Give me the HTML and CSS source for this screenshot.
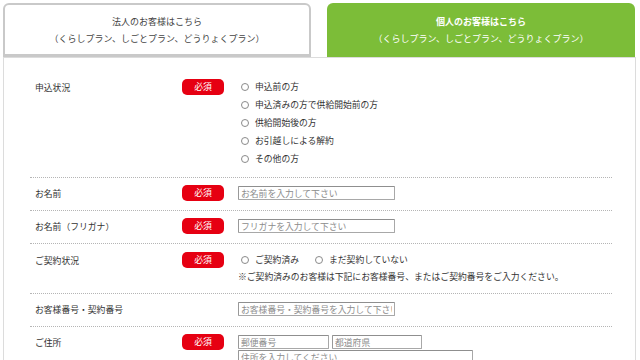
FILE: index.html
```html
<!DOCTYPE html>
<html lang="ja">
<head>
<meta charset="utf-8">
<title>お申込みフォーム</title>
<link rel="stylesheet" href="styles.css">
</head>
<body>
<div class="wrap">
  <div class="tabs">
    <div class="tab tab-corp">
      <div class="tab-title">法人のお客様はこちら</div>
      <div class="tab-sub">（くらしプラン、しごとプラン、どうりょくプラン）</div>
    </div>
    <div class="tab tab-personal">
      <div class="tab-title">個人のお客様はこちら</div>
      <div class="tab-sub">（くらしプラン、しごとプラン、どうりょくプラン）</div>
    </div>
  </div>
  <div class="form">
    <div class="row row-list">
      <div class="label">申込状況</div>
      <div class="badge-cell"><span class="badge">必須</span></div>
      <div class="field">
        <div class="radio-line"><span class="radio"></span>申込前の方</div>
        <div class="radio-line"><span class="radio"></span>申込済みの方で供給開始前の方</div>
        <div class="radio-line"><span class="radio"></span>供給開始後の方</div>
        <div class="radio-line"><span class="radio"></span>お引越しによる解約</div>
        <div class="radio-line"><span class="radio"></span>その他の方</div>
      </div>
    </div>
    <div class="row">
      <div class="label">お名前</div>
      <div class="badge-cell"><span class="badge">必須</span></div>
      <div class="field"><input class="text-input w-mid" type="text" placeholder="お名前を入力して下さい"></div>
    </div>
    <div class="row">
      <div class="label">お名前（フリガナ）</div>
      <div class="badge-cell"><span class="badge">必須</span></div>
      <div class="field"><input class="text-input w-mid" type="text" placeholder="フリガナを入力して下さい"></div>
    </div>
    <div class="row row-list">
      <div class="label">ご契約状況</div>
      <div class="badge-cell"><span class="badge">必須</span></div>
      <div class="field">
        <div class="radio-line">
          <span class="radio-item"><span class="radio"></span>ご契約済み</span>
          <span class="radio-item"><span class="radio"></span>まだ契約していない</span>
        </div>
        <div class="note">※ご契約済みのお客様は下記にお客様番号、またはご契約番号をご入力ください。</div>
      </div>
    </div>
    <div class="row">
      <div class="label">お客様番号・契約番号</div>
      <div class="badge-cell"></div>
      <div class="field"><input class="text-input w-mid" type="text" placeholder="お客様番号・契約番号を入力して下さい"></div>
    </div>
    <div class="row">
      <div class="label">ご住所</div>
      <div class="badge-cell"><span class="badge">必須</span></div>
      <div class="field">
        <div class="addr-line">
          <input class="text-input w-zip" type="text" placeholder="郵便番号">
          <input class="text-input w-pref" type="text" placeholder="都道府県">
        </div>
        <input class="text-input w-addr" type="text" placeholder="住所を入力してください">
      </div>
    </div>
  </div>
</div>
</body>
</html>
```
FILE: styles.css
```css
* { box-sizing: border-box; }
html, body { margin: 0; padding: 0; background: #fff; }
body {
  font-family: "Noto Sans CJK JP", "Noto Sans", sans-serif;
  color: #333;
  overflow: hidden;
}
.wrap {
  width: 636px;
  padding: 3px 0 0 3px;
}
.tabs {
  display: flex;
  gap: 16px;
}
.tab {
  width: 308px;
  height: 54px;
  border-radius: 6px 6px 0 0;
  display: flex;
  flex-direction: column;
  justify-content: center;
  align-items: center;
  font-size: 9px;
  line-height: 17px;
}
.tab-corp {
  border: 2px solid #c9c9c9;
  border-bottom-width: 3px;
  color: #444;
  background: #fff;
}
.tab-personal {
  background: #7cbd38;
  color: #fff;
}
.tab-personal .tab-title { font-weight: bold; }
.form {
  width: 633px;
  border: 1px solid #dcdcdc;
  border-bottom: none;
  padding: 13px 23px 0 26px;
  height: 310px;
}
.row {
  display: grid;
  grid-template-columns: 152px 43px 1fr;
  padding: 7px 0 9px;
  border-top: 1px dotted #b5b5b5;
  font-size: 8.8px;
}
.row:first-child { border-top: none; }
.label {
  padding-left: 5px;
  padding-top: 1px;
  line-height: 15px;
  color: #333;
}
.row-list .label { padding-top: 2px; line-height: 16px; }
.row-list .badge-cell { padding-top: 1px; }
.badge {
  display: block;
  width: 42px;
  height: 16px;
  line-height: 16px;
  border-radius: 5px;
  background: #e60012;
  color: #fff;
  text-align: center;
  font-size: 8.8px;
}
.field {
  margin-left: 13px;
  line-height: 16px;
}
.radio-line {
  display: flex;
  align-items: center;
  height: 18px;
  line-height: 18px;
}
.radio-item {
  display: inline-flex;
  align-items: center;
  margin-right: 13px;
}
.radio {
  display: inline-block;
  width: 8px;
  height: 8px;
  border: 1px solid #8a8a8a;
  border-radius: 50%;
  background: #fff;
  margin: 0 6px 0 3px;
}
.note {
  line-height: 15px;
}
.text-input {
  display: block;
  height: 14px;
  margin: 1px 0 0;
  padding: 0 2px;
  border: 1px solid #a8a8a8;
  border-top-color: #8f8f8f;
  border-left-color: #999;
  border-radius: 1px;
  font-family: "Noto Sans CJK JP", "Noto Sans", sans-serif;
  font-size: 8.8px;
  color: #333;
  background: #fff;
  outline: none;
}
.text-input::placeholder { color: #8c8c8c; }
.w-mid { width: 157px; }
.addr-line {
  display: flex;
  gap: 3px;
  margin-top: 1px;
}
.addr-line .text-input { margin: 0; }
.w-zip { width: 91px; }
.w-pref { width: 90px; }
.w-addr { width: 235px; }
```
